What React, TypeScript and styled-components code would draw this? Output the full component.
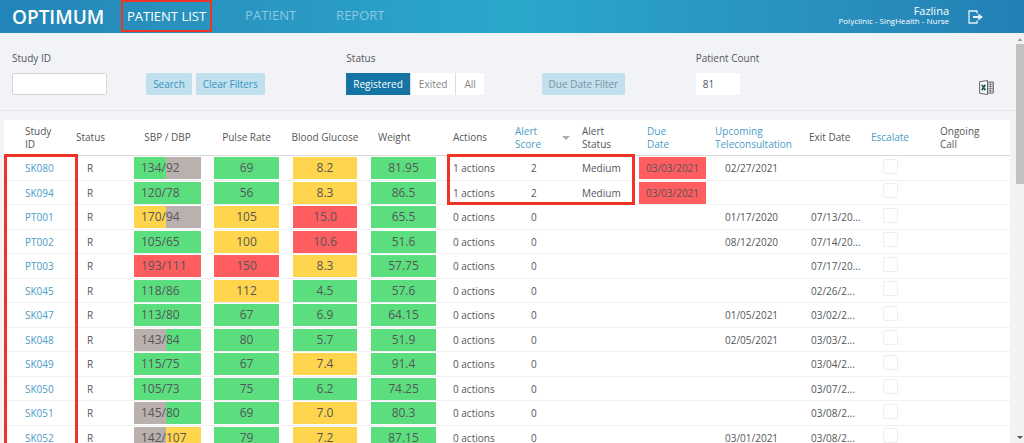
import React from 'react';
import styled, { createGlobalStyle, css } from 'styled-components';

const GlobalStyle = createGlobalStyle`
  * { box-sizing: border-box; }
  body {
    margin: 0;
    background: #f1f3f6;
    color: #55565a;
    font-family: "Open Sans", "Noto Sans", sans-serif;
    font-size: 10px;
    line-height: 14px;
  }
  button, input { font: inherit; color: inherit; margin: 0; }
`;

const levels = {
  green: '#5bdf7e',
  yellow: '#ffd54d',
  red: '#ff5d60',
  grey: '#bab0ae',
};
type Level = keyof typeof levels;

const Shell = styled.div`
  display: flex;
  flex-direction: column;
  height: 100vh;
  overflow: hidden;
`;

const TopBar = styled.header`
  display: flex;
  align-items: center;
  flex: none;
  height: 33px;
  padding: 0 40px 0 12px;
  background: linear-gradient(90deg, #2284b8 0%, #2890bd 15%, #2ba7cc 50%, #2890bf 80%, #2380b4 100%);
  color: #fff;
`;

const Brand = styled.div`
  width: 109px;
  font-size: 19px;
  font-weight: 600;
  line-height: 28px;
`;

const Nav = styled.nav`
  display: flex;
  flex: 1;
  align-self: stretch;
  gap: 26px;
`;

const NavLink = styled.a<{ $active?: boolean }>`
  display: flex;
  align-items: center;
  height: 32px;
  padding: 0 7px 2px;
  font-size: 13px;
  line-height: 18px;
  text-decoration: none;
  white-space: nowrap;
  color: ${p => (p.$active ? '#fff' : '#8dc8e2')};
  ${p => p.$active && css`
    padding: 0 4px;
    border: 2px solid #ee3424;
  `}
`;

const User = styled.div`
  display: flex;
  flex-direction: column;
  align-items: flex-end;
  margin-right: 19px;
  padding-bottom: 3px;
`;

const UserName = styled.span`
  font-size: 11px;
  font-weight: 500;
  line-height: 12px;
`;

const UserRole = styled.span`
  font-size: 8px;
  line-height: 8px;
`;

const IconButton = styled.button`
  display: flex;
  padding: 0;
  border: 0;
  background: none;
  cursor: pointer;
`;

const Body = styled.div`
  display: flex;
  flex: 1;
  min-height: 0;
`;

const Main = styled.main`
  flex: 1;
  min-width: 0;
  overflow: hidden;
`;

const Filters = styled.form`
  display: grid;
  grid-template-columns: 134fr 200fr 195fr 154fr 298fr;
  align-items: end;
  padding: 18px 22px 15px 12px;
  border-bottom: 1px solid #e3e5e8;
`;

const Field = styled.div`
  display: flex;
  flex-direction: column;
  align-items: flex-start;
  gap: 8px;
`;

const TextBox = styled.input`
  width: 95px;
  height: 22px;
  padding: 0 6px;
  border: 1px solid #d5d5d6;
  border-radius: 2px;
  background: #fff;
`;

const Count = styled.output`
  width: 44px;
  height: 22px;
  padding: 4px 7px;
  background: #fff;
`;

const ExportRow = styled.div`
  display: flex;
  justify-content: space-between;
  align-items: flex-end;
  width: 100%;
`;

const ButtonRow = styled.div`
  display: flex;
  gap: 4px;
`;

const ActionButton = styled.button<{ $muted?: boolean }>`
  height: 22px;
  padding: 0 7px;
  border: 0;
  border-radius: 2px;
  background: #c0e0ee;
  color: ${p => (p.$muted ? '#8292a0' : '#3993bf')};
  white-space: nowrap;
  cursor: pointer;
`;

const Segments = styled.div`
  display: flex;
  gap: 1px;
  background: #dcdcde;
`;

const Segment = styled.button<{ $active?: boolean }>`
  height: 22px;
  padding: 0 ${p => (p.$active ? 7 : 8)}px;
  border: 0;
  background: ${p => (p.$active ? '#1474a4' : '#fff')};
  color: ${p => (p.$active ? '#fff' : '#85868a')};
  font-weight: ${p => (p.$active ? 500 : 400)};
  cursor: pointer;
`;

const TableArea = styled.section`
  position: relative;
  margin: 9px 6px 0 4px;
  background: #fff;
`;

const Table = styled.table`
  width: 100%;
  border-collapse: separate;
  border-spacing: 0;
  table-layout: fixed;
`;

const Th = styled.th<{ $pad?: number; $center?: boolean }>`
  height: 36px;
  padding: 0 0 0 ${p => p.$pad ?? 8}px;
  border-bottom: 1px solid #d9d9da;
  font-weight: 400;
  line-height: 13px;
  text-align: ${p => (p.$center ? 'center' : 'left')};
  vertical-align: middle;
`;

const SortLink = styled.button`
  display: flex;
  align-items: center;
  justify-content: space-between;
  width: 100%;
  padding: 0 4px 0 0;
  border: 0;
  background: none;
  color: #4a9cc6;
  line-height: 13px;
  text-align: left;
  cursor: pointer;
`;

const Row = styled.tr`
  height: 25px;
  &:nth-child(even) { height: 24px; }
`;

const Td = styled.td<{ $pad?: number }>`
  padding: 0 0 0 ${p => p.$pad ?? 8}px;
  border-bottom: 1px solid #f1f1f2;
  overflow: hidden;
  white-space: nowrap;
  vertical-align: middle;
`;

const BadgeTd = styled(Td)<{ $inset?: number }>`
  padding: 0 ${p => p.$inset ?? 7}px;
`;

const StudyLink = styled.a`
  color: #4a9cc6;
  text-decoration: none;
`;

const Badge = styled.div<{ $level: Level; $small?: boolean }>`
  height: 22px;
  background: ${p => levels[p.$level]};
  font-size: ${p => (p.$small ? 10 : 12)}px;
  line-height: 22px;
  text-align: center;
`;

const SplitBadge = styled.div`
  display: grid;
  grid-template-columns: 32fr 35fr;
  height: 22px;
  font-size: 12px;
  line-height: 22px;
`;

const Half = styled.span<{ $level: Level; $end?: boolean }>`
  background: ${p => levels[p.$level]};
  text-align: ${p => (p.$end ? 'right' : 'left')};
`;

const CheckBox = styled.input`
  appearance: none;
  display: block;
  width: 15px;
  height: 15px;
  margin-bottom: 4px;
  border: 1px solid #eeeeef;
  border-radius: 2px;
  background: #fff;
`;

const Highlight = styled.div<{ $left: string; $right: string; $height: string }>`
  position: absolute;
  top: 34px;
  left: ${p => p.$left};
  right: ${p => p.$right};
  height: ${p => p.$height};
  border: 3px solid #ee3424;
  pointer-events: none;
`;

const ScrollTrack = styled.div`
  display: flex;
  flex-direction: column;
  align-items: center;
  flex: none;
  width: 8px;
  padding: 5px 0 4px;
  background: #f1f2f2;
`;

const ScrollThumb = styled.div`
  width: 8px;
  height: 140px;
  margin: 3px 0 auto;
  background: #c1c1c2;
`;

const Arrow = ({ up, size = 4, color }: { up?: boolean; size?: number; color: string }) => (
  <svg width={size * 2} height={size} viewBox="0 0 8 4" aria-hidden="true">
    <path d={up ? 'M1 4 4 0l3 4z' : 'M0 0h8L4 4z'} fill={color} />
  </svg>
);

const LogoutIcon = () => (
  <svg width="16" height="14" viewBox="0 0 16 14" fill="none" aria-hidden="true">
    <path d="M9 3.4V1H1v12h8v-2.4" stroke="#e3f1f8" strokeWidth="1.3" />
    <path d="M5 6h5.2V3.6L15 7l-4.8 3.4V8H5z" fill="#e3f1f8" />
  </svg>
);

const ExcelIcon = () => (
  <svg width="15" height="15" viewBox="0 0 15 15" fill="none" aria-hidden="true">
    <path d="M8.5 2h5.8v11H8.5" stroke="#55565a" strokeWidth=".9" />
    <path d="M9 4.2h5M9 6.4h5M9 8.6h5M9 10.8h5M11.4 2v11" stroke="#6a6b6e" strokeWidth=".8" />
    <path d="M.6 1.7 8.5.5v14L.6 13.3z" fill="#f6f7f8" stroke="#55565a" strokeWidth=".9" />
    <path d="m2.8 4.8 3.5 5.4M6.3 4.8l-3.5 5.4" stroke="#2d5a45" strokeWidth="1.7" />
  </svg>
);

type Reading = [string, Level];
interface Patient {
  id: string;
  sbp: Reading;
  dbp: Reading;
  pulse: Reading;
  glucose: Reading;
  weight: string;
  actions?: number;
  score?: number;
  alert?: string;
  due?: string;
  call?: string;
  exit?: string;
}

const patients: Patient[] = [
  { id: 'SK080', sbp: ['134', 'green'], dbp: ['92', 'grey'], pulse: ['69', 'green'], glucose: ['8.2', 'yellow'], weight: '81.95', actions: 1, score: 2, alert: 'Medium', due: '03/03/2021', call: '02/27/2021' },
  { id: 'SK094', sbp: ['120', 'green'], dbp: ['78', 'green'], pulse: ['56', 'green'], glucose: ['8.3', 'yellow'], weight: '86.5', actions: 1, score: 2, alert: 'Medium', due: '03/03/2021' },
  { id: 'PT001', sbp: ['170', 'yellow'], dbp: ['94', 'grey'], pulse: ['105', 'yellow'], glucose: ['15.0', 'red'], weight: '65.5', call: '01/17/2020', exit: '07/13/20...' },
  { id: 'PT002', sbp: ['105', 'green'], dbp: ['65', 'green'], pulse: ['100', 'yellow'], glucose: ['10.6', 'red'], weight: '51.6', call: '08/12/2020', exit: '07/14/20...' },
  { id: 'PT003', sbp: ['193', 'red'], dbp: ['111', 'red'], pulse: ['150', 'red'], glucose: ['8.3', 'yellow'], weight: '57.75', exit: '07/17/20...' },
  { id: 'SK045', sbp: ['118', 'green'], dbp: ['86', 'green'], pulse: ['112', 'yellow'], glucose: ['4.5', 'green'], weight: '57.6', exit: '02/26/2...' },
  { id: 'SK047', sbp: ['113', 'green'], dbp: ['80', 'green'], pulse: ['67', 'green'], glucose: ['6.9', 'green'], weight: '64.15', call: '01/05/2021', exit: '03/02/2...' },
  { id: 'SK048', sbp: ['143', 'grey'], dbp: ['84', 'green'], pulse: ['80', 'green'], glucose: ['5.7', 'green'], weight: '51.9', call: '02/05/2021', exit: '03/03/2...' },
  { id: 'SK049', sbp: ['115', 'green'], dbp: ['75', 'green'], pulse: ['67', 'green'], glucose: ['7.4', 'yellow'], weight: '91.4', exit: '03/04/2...' },
  { id: 'SK050', sbp: ['105', 'green'], dbp: ['73', 'green'], pulse: ['75', 'green'], glucose: ['6.2', 'green'], weight: '74.25', exit: '03/07/2...' },
  { id: 'SK051', sbp: ['145', 'grey'], dbp: ['80', 'green'], pulse: ['69', 'green'], glucose: ['7.0', 'yellow'], weight: '80.3', exit: '03/08/2...' },
  { id: 'SK052', sbp: ['142', 'grey'], dbp: ['107', 'yellow'], pulse: ['79', 'green'], glucose: ['7.2', 'yellow'], weight: '87.15', call: '03/01/2021', exit: '03/08/2...' },
];

const columnWidths = [64, 60, 79, 79, 78, 79, 62, 69, 59, 79, 89, 62, 69, 78];

const PatientRow = ({ p }: { p: Patient }) => (
  <Row>
    <Td $pad={21}><StudyLink href="#">{p.id}</StudyLink></Td>
    <Td $pad={19}>R</Td>
    <BadgeTd $inset={6}>
      <SplitBadge>
        <Half $level={p.sbp[1]} $end>{p.sbp[0]}/</Half>
        <Half $level={p.dbp[1]}>{p.dbp[0]}</Half>
      </SplitBadge>
    </BadgeTd>
    <BadgeTd><Badge $level={p.pulse[1]}>{p.pulse[0]}</Badge></BadgeTd>
    <BadgeTd><Badge $level={p.glucose[1]}>{p.glucose[0]}</Badge></BadgeTd>
    <BadgeTd><Badge $level="green">{p.weight}</Badge></BadgeTd>
    <Td $pad={10}>{p.actions ?? 0} actions</Td>
    <Td $pad={26}>{p.score ?? 0}</Td>
    <Td>{p.alert}</Td>
    <BadgeTd $inset={6}>{p.due && <Badge $level="red" $small>{p.due}</Badge>}</BadgeTd>
    <Td $pad={13}>{p.call}</Td>
    <Td $pad={10}>{p.exit}</Td>
    <Td $pad={20}><CheckBox type="checkbox" aria-label={`Escalate ${p.id}`} /></Td>
    <Td />
  </Row>
);

export default function App() {
  return (
    <Shell>
      <GlobalStyle />
      <TopBar>
        <Brand>OPTIMUM</Brand>
        <Nav>
          <NavLink href="#" $active>PATIENT LIST</NavLink>
          <NavLink href="#">PATIENT</NavLink>
          <NavLink href="#">REPORT</NavLink>
        </Nav>
        <User>
          <UserName>Fazlina</UserName>
          <UserRole>Polyclinic - SingHealth - Nurse</UserRole>
        </User>
        <IconButton type="button" aria-label="Log out"><LogoutIcon /></IconButton>
      </TopBar>
      <Body>
        <Main>
          <Filters>
            <Field>
              <label htmlFor="study-id">Study ID</label>
              <TextBox id="study-id" type="text" />
            </Field>
            <ButtonRow>
              <ActionButton type="button">Search</ActionButton>
              <ActionButton type="button">Clear Filters</ActionButton>
            </ButtonRow>
            <Field role="group" aria-labelledby="status-label">
              <span id="status-label">Status</span>
              <Segments>
                <Segment type="button" $active>Registered</Segment>
                <Segment type="button">Exited</Segment>
                <Segment type="button">All</Segment>
              </Segments>
            </Field>
            <ButtonRow>
              <ActionButton type="button" $muted>Due Date Filter</ActionButton>
            </ButtonRow>
            <Field>
              <label htmlFor="patient-count">Patient Count</label>
              <ExportRow>
                <Count id="patient-count">81</Count>
                <IconButton type="button" aria-label="Export to Excel"><ExcelIcon /></IconButton>
              </ExportRow>
            </Field>
          </Filters>
          <TableArea>
            <Table>
              <colgroup>
                {columnWidths.map((w, i) => <col key={i} width={w} />)}
              </colgroup>
              <thead>
                <tr>
                  <Th $pad={21}>Study<br />ID</Th>
                  <Th>Status</Th>
                  <Th $pad={0} $center>SBP / DBP</Th>
                  <Th $pad={0} $center>Pulse Rate</Th>
                  <Th $pad={0} $center>Blood Glucose</Th>
                  <Th $pad={14}>Weight</Th>
                  <Th $pad={10}>Actions</Th>
                  <Th $pad={10}>
                    <SortLink type="button">
                      <span>Alert<br />Score</span>
                      <Arrow color="#b3aaaa" />
                    </SortLink>
                  </Th>
                  <Th>Alert<br />Status</Th>
                  <Th $pad={14}><SortLink type="button">Due<br />Date</SortLink></Th>
                  <Th $pad={3}><SortLink type="button">Upcoming<br />Teleconsultation</SortLink></Th>
                  <Th>Exit Date</Th>
                  <Th><SortLink type="button">Escalate</SortLink></Th>
                  <Th>Ongoing<br />Call</Th>
                </tr>
              </thead>
              <tbody>
                {patients.map(p => <PatientRow key={p.id} p={p} />)}
              </tbody>
            </Table>
            <Highlight $left="0%" $right="calc(100% - 74px)" $height="100%" />
            <Highlight $left="44%" $right="calc(37% + 3px)" $height="51px" />
          </TableArea>
        </Main>
        <ScrollTrack>
          <Arrow up size={3} color="#9a9a9b" />
          <ScrollThumb />
          <Arrow size={3} color="#505050" />
        </ScrollTrack>
      </Body>
    </Shell>
  );
}
